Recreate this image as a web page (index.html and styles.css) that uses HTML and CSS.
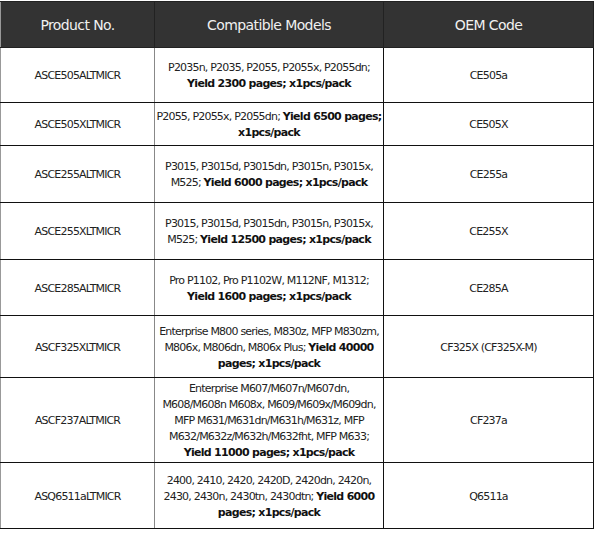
FILE: index.html
```html
<!DOCTYPE html>
<html>
<head>
<meta charset="utf-8">
<link rel="stylesheet" href="styles.css">
</head>
<body>
<table class="spec">
  <colgroup><col class="c1"><col class="c2"><col class="c3"></colgroup>
  <thead>
    <tr class="head"><th>Product No.</th><th>Compatible Models</th><th>OEM Code</th></tr>
  </thead>
  <tbody>
    <tr class="h55"><td class="pn">ASCE505ALTMICR</td><td>P2035n, P2035, P2055, P2055x, P2055dn;<br><b>Yield 2300 pages; x1pcs/pack</b></td><td>CE505a</td></tr>
    <tr class="h43"><td class="pn">ASCE505XLTMICR</td><td>P2055, P2055x, P2055dn; <b>Yield 6500 pages;</b><br><b>x1pcs/pack</b></td><td>CE505X</td></tr>
    <tr class="h57"><td class="pn">ASCE255ALTMICR</td><td>P3015, P3015d, P3015dn, P3015n, P3015x,<br>M525; <b>Yield 6000 pages; x1pcs/pack</b></td><td>CE255a</td></tr>
    <tr class="h57"><td class="pn">ASCE255XLTMICR</td><td>P3015, P3015d, P3015dn, P3015n, P3015x,<br>M525; <b>Yield 12500 pages; x1pcs/pack</b></td><td>CE255X</td></tr>
    <tr class="h56"><td class="pn">ASCE285ALTMICR</td><td>Pro P1102, Pro P1102W, M112NF, M1312;<br><b>Yield 1600 pages; x1pcs/pack</b></td><td>CE285A</td></tr>
    <tr class="h62"><td class="pn">ASCF325XLTMICR</td><td>Enterprise M800 series, M830z, MFP M830zm,<br>M806x, M806dn, M806x Plus; <b>Yield 40000</b><br><b>pages; x1pcs/pack</b></td><td>CF325X (CF325X-M)</td></tr>
    <tr class="h85"><td class="pn">ASCF237ALTMICR</td><td>Enterprise M607/M607n/M607dn,<br>M608/M608n M608x, M609/M609x/M609dn,<br>MFP M631/M631dn/M631h/M631z, MFP<br>M632/M632z/M632h/M632fht, MFP M633;<br><b>Yield 11000 pages; x1pcs/pack</b></td><td>CF237a</td></tr>
    <tr class="h66"><td class="pn">ASQ6511aLTMICR</td><td>2400, 2410, 2420, 2420D, 2420dn, 2420n,<br>2430, 2430n, 2430tn, 2430dtn; <b>Yield 6000</b><br><b>pages; x1pcs/pack</b></td><td>Q6511a</td></tr>
  </tbody>
</table>
</body>
</html>
```
FILE: styles.css
```css
html, body {
  margin: 0;
  padding: 0;
  background: #ffffff;
}
.spec {
  border-collapse: collapse;
  table-layout: fixed;
  width: 593px;
  margin-top: 1px;
  font-family: "DejaVu Sans", Verdana, sans-serif;
  font-size: 11px;
  letter-spacing: -0.8px;
  line-height: 16px;
  color: #222222;
}
.c1 { width: 154px; }
.c2 { width: 229px; }
.c3 { width: 210px; }
.spec th {
  background: #333333;
  color: #f0f0f0;
  font-weight: normal;
  font-size: 14px;
  letter-spacing: -0.6px;
  height: 45px;
  padding: 0;
  text-align: center;
  vertical-align: middle;
  border: 1px solid #222;
  border-left: 1px solid #999;
}
.spec td {
  border: 1px solid #111;
  padding: 2px 1px 0;
  text-align: center;
  vertical-align: middle;
  white-space: nowrap;
}
.spec td.pn {
  border-left: 1px solid #999;
  border-right: 1px solid #888;
}
.spec b {
  font-weight: bold;
  color: #111;
  letter-spacing: -0.7px;
}
.h55 td { height: 52px; }
.h43 td { height: 40px; }
.h57 td { height: 54px; }
.h56 td { height: 53px; }
.h62 td { height: 59px; }
.h85 td { height: 82px; }
.h66 td { height: 63px; }
```
